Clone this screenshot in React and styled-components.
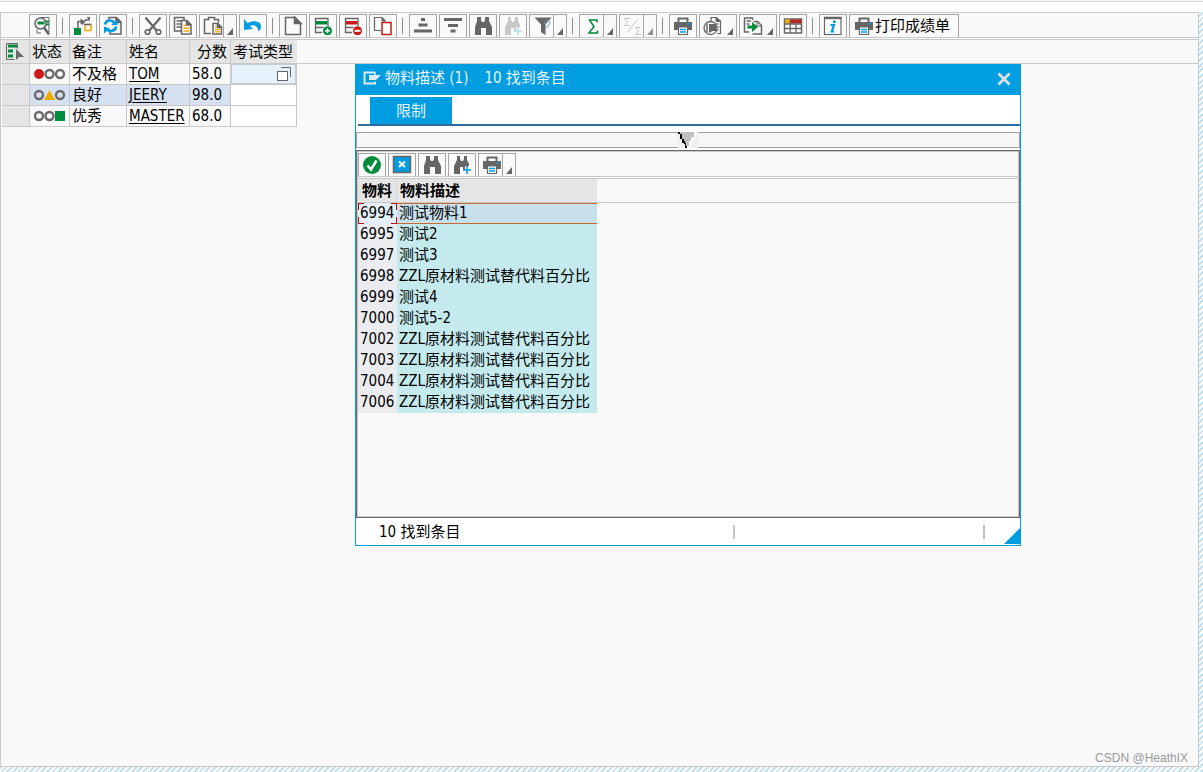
import React from 'react';
import styled, { createGlobalStyle, css } from 'styled-components';

const GlobalStyle = createGlobalStyle`
  *, *::before, *::after { box-sizing: border-box; }
  html, body, #root { height: 100%; }
  body {
    margin: 0;
    color: #000;
    font-family: "DejaVu Sans Condensed", "Noto Sans", "Noto Sans CJK SC", sans-serif;
    font-size: 15px;
    line-height: 20px;
  }
  button, input { font: inherit; color: inherit; }
`;

const Page = styled.div`
  display: flex;
  flex-direction: column;
  min-height: 100vh;
  padding: 0 4px 5px 0;
  background: repeating-linear-gradient(135deg, #ffffff 0 2px, #c5e1f0 2px 4px);
`;

const TopStrip = styled.div`
  flex: none;
  height: 12px;
  margin-right: -4px;
  border-top: 1px solid #f4f4f4;
  background: #fff;
  box-shadow: inset 0 1px #d9d9d9;
`;

const Workspace = styled.main`
  position: relative;
  flex: 1;
  background: #f9f9f9;
  border: 1px solid #c8c8c8;
`;

const Toolbar = styled.div`
  display: flex;
  gap: 2px;
  height: 25px;
  padding: 1px 0 0 ${p => p.$inset}px;
  border-bottom: 1px solid #c8c8c8;
`;

const Separator = styled.span`
  width: 8px;
  height: 16px;
  margin-top: 4px;
  padding-left: 3px;
  &::before {
    content: "";
    display: block;
    width: 1px;
    height: 100%;
    background: #8c8c8c;
  }
`;

const ToolButton = styled.button`
  display: flex;
  align-items: center;
  gap: 1px;
  min-width: 28px;
  height: 23px;
  padding: 0 8px 0 4px;
  border: 1px solid #a6a6a6;
  border-bottom: 0;
  background: #fafafa;
  white-space: nowrap;
  ${p => !p.$label && css`
    width: ${p.$menu ? 38 : 28}px;
    padding: 0 0 0 3px;
    gap: 0;
  `}
  svg { flex: none; display: block; }
`;

const MenuMark = styled.span`
  align-self: stretch;
  display: flex;
  align-items: flex-end;
  width: 12px;
  padding: 0 0 2px 3px;
  border-left: 1px solid ${p => (p.$split ? '#a6a6a6' : 'transparent')};
`;

const HeaderBand = styled.div`
  margin-top: 1px;
  border-top: 1px solid #c8c8c8;
  background: linear-gradient(#c8c8c8, #c8c8c8) 0 23px / 100% 1px no-repeat;
`;

const DataTable = styled.table`
  table-layout: fixed;
  width: 295px;
  margin-left: 1px;
  border-collapse: separate;
  border-spacing: 0;
`;

const HeadCell = styled.th`
  height: 24px;
  padding: 0 3px 0 2px;
  border-right: 1px solid #c8c8c8;
  border-bottom: 1px solid #c8c8c8;
  background: #e5e5e5;
  font-weight: 400;
  text-align: ${p => (p.$right ? 'right' : 'left')};
  white-space: nowrap;
  &:last-child { border-right-color: #e5e5e5; }
  svg { display: block; }
`;

const Cell = styled.td`
  height: 21px;
  padding: 0 0 0 2px;
  border-right: 1px solid #c8c8c8;
  border-bottom: 1px solid #c8c8c8;
  background: ${p => p.$fill || '#f9f9f9'};
  line-height: 20px;
  white-space: nowrap;
  svg { display: block; }
`;

const NameLink = styled.a`
  color: #000;
  text-decoration: underline;
  text-underline-offset: 2px;
`;

const EntryField = styled.div`
  display: flex;
  align-items: center;
  height: 20px;
  margin-left: -2px;
  border: 1px solid #c8ccd0;
  background: #e5f2fb;
  input {
    flex: 1;
    min-width: 0;
    height: 18px;
    padding: 0;
    border: 0;
    outline: 0;
    background: transparent;
  }
  button {
    width: 19px;
    height: 18px;
    padding: 1px 0;
    border: 0;
    background: transparent;
  }
`;

const Dialog = styled.section`
  position: absolute;
  top: 51px;
  left: 354px;
  display: flex;
  flex-direction: column;
  width: 666px;
  border: 1px solid #009de0;
  border-top: 0;
  background: #fff;
`;

const TitleBar = styled.header`
  display: flex;
  align-items: center;
  height: 31px;
  padding: 0 9px 4px 7px;
  background: #009de0;
  color: #e8f2f8;
  h2 {
    flex: 1;
    margin: 0 0 0 4px;
    font-size: 15px;
    font-weight: 400;
  }
  span { margin-left: 16px; }
`;

const CloseButton = styled.button`
  width: 14px;
  height: 14px;
  margin-top: 3px;
  padding: 0;
  border: 0;
  background: transparent;
  svg { display: block; }
`;

const TabRow = styled.div`
  margin-left: 2px;
  padding: 2px 0 0 12px;
  border-bottom: 2px solid #2f6ca0;
`;

const Tab = styled.button`
  display: block;
  width: 82px;
  height: 27px;
  padding: 0;
  border: 0;
  background: #009de0;
  color: #e8f2f8;
`;

const Splitter = styled.div`
  display: flex;
  justify-content: center;
  height: 16px;
  margin: 6px 0 2px;
  border: 1px solid #a0a0a0;
  background: #f7f7f7;
  svg { display: block; margin: -1px 0; }
`;

const ResultPane = styled.div`
  height: 368px;
  border: 1px solid #6a6a6a;
  background: #f9f9f9;
  box-shadow: inset 0 0 0 1px #c8c8c8;
  padding: 1px;
`;

const ResultTable = styled.table`
  table-layout: fixed;
  width: 239px;
  border-collapse: separate;
  border-spacing: 0;
`;

const ResultHead = styled.th`
  height: 24px;
  padding: 0 0 0 ${p => (p.$key ? 4 : 3)}px;
  border-right: 1px solid ${p => (p.$key ? '#d4d4d4' : '#e5e5e5')};
  border-bottom: 1px solid #c8c8c8;
  background: #e5e5e5;
  text-align: left;
  white-space: nowrap;
`;

const KeyCell = styled.td`
  height: 21px;
  padding: 0 0 0 2px;
  background: #ebecf0;
  line-height: 21px;
  ${p => p.$selected && css`
    background:
      linear-gradient(90deg, #b01020 6px, transparent 6px 33px, #b01020 33px) 0 0 / 100% 1px no-repeat,
      linear-gradient(90deg, #b01020 6px, transparent 6px 33px, #b01020 33px) 0 100% / 100% 1px no-repeat,
      linear-gradient(#b01020 7px, transparent 7px 14px, #b01020 14px) 0 0 / 1px 100% no-repeat,
      linear-gradient(#b01020 7px, transparent 7px 14px, #b01020 14px) 100% 0 / 1px 100% no-repeat,
      #e5eff6;
  `}
`;

const TextCell = styled.td`
  height: 21px;
  padding: 0 0 0 2px;
  background: ${p => (p.$selected ? '#c8dfec' : '#c5eaed')};
  box-shadow: ${p => (p.$selected ? 'inset 0 1px #c8692d, inset 0 -1px #c8692d' : 'none')};
  line-height: 21px;
  white-space: nowrap;
`;

const StatusBar = styled.footer`
  display: flex;
  align-items: center;
  height: 27px;
  padding-left: 23px;
`;

const StatusText = styled.span`
  flex: 1;
`;

const StatusField = styled.span`
  width: ${p => p.$width}px;
  height: 14px;
  border-left: 2px solid #c2c2c2;
`;

const ResizeGrip = styled.svg`
  position: absolute;
  right: 0;
  bottom: 1px;
`;

const Watermark = styled.div`
  position: absolute;
  right: 10px;
  bottom: 0;
  color: #999;
  font-family: "Liberation Sans", sans-serif;
  font-size: 12px;
  line-height: 16px;
`;

const G = '#666';
const GREEN = '#008a3b';
const BLUE = '#009de0';
const RED = '#cc1919';
const AMBER = '#f0ab00';

const Icon = ({ children, w = 20, h = 20 }) => (
  <svg width={w} height={h} viewBox={`0 0 ${w} ${h}`} fill="none" stroke={G} strokeWidth="1.5" aria-hidden="true">
    {children}
  </svg>
);

const binoculars = 'M4 1h4v3l1 2h2l1-2V1h4v4l3 6v8h-6v-7H8v7H2v-8l2-6z';
const binocularsCut = 'M5 1h3v3l1 2h2l1-2V1h3v4l2 4v2h-4v4h-2v-3H8v7H2v-8l3-6z';

const icons = {
  details: (
    <Icon>
      <path d="M8 1.500H16V16H14" strokeWidth="1" />
      <path d="M11 5.500h5M12 8.500h4" stroke={GREEN} strokeWidth="2" />
      <path d="M4 13.500V17h4" strokeWidth="1" />
      <circle cx="7.500" cy="7.500" r="5.500" fill="#f9f9f9" />
      <path d="M4.500 7h7" stroke={GREEN} strokeWidth="3" />
      <path d="M11 11.500l5 7" strokeWidth="2.600" />
    </Icon>
  ),
  check: (
    <Icon>
      <path d="M5 12V5.500h4M12 4h4" />
      <path d="M7.500 2.500l4.500 3-4.500 3zM13.500 1h3.500v4z" fill={G} stroke="none" />
      <path d="M9 8.500l4-5" />
      <rect x="1" y="12" width="7" height="7" fill={GREEN} stroke="none" />
      <rect x="12" y="8.500" width="6" height="6" stroke={AMBER} />
      <path d="M11 8.500h7" />
    </Icon>
  ),
  refresh: (
    <Icon>
      <path d="M6 4V1.500h7.500L18 6v12H7v-2" />
      <path d="M13 1v5.500h5" fill={G} />
      <path d="M2 8.500C3 4 9 3 11 7M13 10.500c-.5 5-7 6-9.500 2" stroke={BLUE} strokeWidth="2.600" />
      <path d="M8 9h6.500V3.500zM1 10.500v7l6-5z" fill={BLUE} stroke="none" />
    </Icon>
  ),
  cut: (
    <Icon>
      <path d="M2.500 1.500L14 15M17.500 1.500L6 15" strokeWidth="2.200" />
      <circle cx="4.500" cy="16" r="2.300" strokeWidth="1.600" />
      <circle cx="15.500" cy="16" r="2.300" strokeWidth="1.600" />
    </Icon>
  ),
  copy: (
    <Icon>
      <path d="M1.500 1.500H11V15H1.500z" />
      <path d="M3.500 5h5M3.500 8h5M3.500 11h5" strokeWidth="1.300" />
      <path d="M8.500 4.500H14l4 4v9.500H8.500z" fill="#fff" />
      <path d="M13.500 4v5H18" fill={G} />
      <path d="M10.500 9.500h3M10.500 12.200h6M10.500 15h6" stroke={AMBER} />
    </Icon>
  ),
  paste: (
    <Icon>
      <path d="M5 3.500H1.500v14H8M12 3.500h3.500v3" />
      <path d="M5.500 4.500v-3h6v3" fill="#fff" />
      <path d="M10 7.500h5l3.500 3.500v7H10z" fill="#fff" />
      <path d="M14.500 7.500v4h4" fill={G} />
      <path d="M12 11h2M12 13.500h5M12 15.800h5" stroke={AMBER} />
    </Icon>
  ),
  undo: (
    <Icon>
      <path d="M1 3v11l9-1-3-3c4-2 8 0 8.500 5.500C22 9 15 2 4.500 7z" fill={BLUE} stroke="none" />
    </Icon>
  ),
  create: (
    <Icon>
      <path d="M2.500 1.500H12L17.500 7v11.500h-15z" />
      <path d="M11.500 1v6.500H18z" fill={G} />
    </Icon>
  ),
  insertRow: (
    <Icon>
      <path d="M9 16.500H2.500v-14h12.500V10M2.500 11.500h8" strokeWidth="1.300" />
      <rect x="3" y="5" width="11.500" height="3.500" fill={GREEN} stroke="none" />
      <circle cx="14.500" cy="14.800" r="4.500" fill={GREEN} stroke="none" />
      <path d="M12 14.800h5M14.500 12.300v5" stroke="#fff" />
    </Icon>
  ),
  deleteRow: (
    <Icon>
      <path d="M9 16.500H2.500v-14h12.500V10M2.500 11.500h8" strokeWidth="1.300" />
      <rect x="3" y="5" width="11.500" height="3.500" fill={RED} stroke="none" />
      <circle cx="14.500" cy="14.800" r="4.500" fill={RED} stroke="none" />
      <path d="M11.500 14.800h6" stroke="#fff" strokeWidth="2" />
    </Icon>
  ),
  duplicate: (
    <Icon>
      <path d="M8 14.500H1.500v-13H9L12.500 5" strokeWidth="1.200" />
      <path d="M8.500 1v4.500H13z" fill={G} stroke="none" />
      <rect x="9" y="6.500" width="9" height="12" stroke={RED} fill="#fff" />
    </Icon>
  ),
  sortUp: (
    <Icon>
      <path d="M8 3.500h4M5.500 9h9M1 15h18" strokeWidth="3.200" />
    </Icon>
  ),
  sortDown: (
    <Icon>
      <path d="M1 3.500h18M5 9.500h10M7.500 15h5" strokeWidth="3.200" />
    </Icon>
  ),
  find: <Icon><path d={binoculars} fill={G} stroke="none" /></Icon>,
  findNextOff: (
    <Icon>
      <path d={binocularsCut} fill="#c8c8c8" stroke="none" />
      <path d="M11 15h8M15 11v8" stroke="#b9dff0" />
    </Icon>
  ),
  findNext: (
    <Icon>
      <path d={binocularsCut} fill={G} stroke="none" />
      <path d="M11 15h8M15 11v8" stroke={BLUE} />
    </Icon>
  ),
  filter: (
    <Icon>
      <path d="M1.500 1.500h17L12.500 8.500v10.500L8 16V8.500z" fill={G} stroke="none" />
      <path d="M12 11.500l3-1 2-5-3-1.500-3 4" stroke="#7f9aa6" strokeWidth="1" />
    </Icon>
  ),
  sum: (
    <Icon>
      <path d="M14 6.500V4H6.500l4.500 6.500L6 17h8.500v-2.500" stroke={GREEN} strokeWidth="1.500" />
    </Icon>
  ),
  subtotal: (
    <Icon>
      <path d="M6.500 2.500h-5l3 3.500-3 3.500h5.500M17.500 11.500h-5l3 3.500-3 3.500h5.500M14 4L5 16" stroke="#c4c4c4" strokeWidth="1" />
    </Icon>
  ),
  print: (
    <Icon>
      <path d="M5.500 6V2.500h9V6" strokeWidth="2" />
      <path d="M1 6h18v8h-4v-3H5v3H1z" fill={G} stroke="none" />
      <path d="M14.500 7.800h2.500" stroke={BLUE} />
      <path d="M5.500 11h9v7.500h-9z" fill="#fff" strokeWidth="1.200" />
      <path d="M7 13.500h6M7 16h6" stroke={BLUE} />
    </Icon>
  ),
  views: (
    <Icon>
      <path d="M8 5V1.500h5.500L17.500 5v12.500H14M12 8h4M13.500 11h3M14 14h2" strokeWidth="1.200" />
      <path d="M13 1v4.500h4.500" fill={G} strokeWidth="1" />
      <circle cx="7.500" cy="12" r="6.500" fill="#fff" strokeWidth="1.300" />
      <path d="M6 8h7v7H9.500L6 17z" fill={G} stroke="none" />
      <path d="M4 7.500v9" />
    </Icon>
  ),
  exportData: (
    <Icon>
      <path d="M9.500 4V2H1.500v14H6M3.500 5h4.500M3.500 8h3" />
      <path d="M10.500 5.500h4l4 4V18H9.500" />
      <path d="M14 5v5h4.500" strokeWidth="1" />
      <path d="M4.500 9.500H9V6l6 5-6 5v-3.500H4.500z" fill={GREEN} stroke="none" />
    </Icon>
  ),
  layout: (
    <Icon>
      <rect x="1.500" y="3" width="17" height="14" fill="#fff" />
      <rect x="2" y="3.500" width="5" height="4" fill={AMBER} stroke="none" />
      <rect x="7" y="3.500" width="11" height="4" fill={RED} stroke="none" />
      <path d="M1 8h18M1 12.500h18M7.200 3v14M13 3v14" strokeWidth="1.300" />
    </Icon>
  ),
  info: (
    <Icon>
      <rect x="1.500" y="1.500" width="16.500" height="17" fill="#fff" strokeWidth="1.200" />
      <path d="M1 2h17.500" strokeWidth="2.400" />
      <path d="M7.500 9H11L8.800 15.500h2.400" stroke={BLUE} strokeWidth="2.200" />
      <circle cx="11.300" cy="5.800" r="1.500" fill={BLUE} stroke="none" />
    </Icon>
  ),
  accept: (
    <Icon>
      <circle cx="10" cy="10" r="9" fill={GREEN} stroke="none" />
      <path d="M5.500 10.500l3.500 4 5.500-9" stroke="#fff" strokeWidth="2.600" />
    </Icon>
  ),
  cancel: (
    <Icon>
      <rect x="1.500" y="1.500" width="17" height="16" fill={BLUE} />
      <path d="M7 6.500l6 5.500M13 6.500l-6 5.500" stroke="#fff" strokeWidth="2" />
    </Icon>
  ),
};

const MenuArrow = ({ muted }) => (
  <svg width="7" height="7" viewBox="0 0 7 7" aria-hidden="true">
    <path d="M6 0v7H0z" fill={muted ? '#909098' : '#666'} />
  </svg>
);

const mainTools = [
  { icon: 'details', title: '明细' }, null,
  { icon: 'check', title: '检查' }, { icon: 'refresh', title: '刷新' }, null,
  { icon: 'cut', title: '剪切' }, { icon: 'copy', title: '复制' },
  { icon: 'paste', title: '粘贴', menu: true, split: true }, { icon: 'undo', title: '撤销' }, null,
  { icon: 'create', title: '新建' }, { icon: 'insertRow', title: '插入行' },
  { icon: 'deleteRow', title: '删除行' }, { icon: 'duplicate', title: '复制行' }, null,
  { icon: 'sortUp', title: '升序' }, { icon: 'sortDown', title: '降序' },
  { icon: 'find', title: '查找' }, { icon: 'findNextOff', title: '查找下一个', disabled: true },
  { icon: 'filter', title: '过滤', menu: true, split: true }, null,
  { icon: 'sum', title: '总计', menu: true, split: true },
  { icon: 'subtotal', title: '小计', menu: true, split: true, disabled: true }, null,
  { icon: 'print', title: '打印' }, { icon: 'views', title: '视图', menu: true },
  { icon: 'exportData', title: '导出', menu: true }, { icon: 'layout', title: '布局' }, null,
  { icon: 'info', title: '信息' }, { icon: 'print', label: '打印成绩单' },
];

const dialogTools = [
  { icon: 'accept', title: '确认' }, { icon: 'cancel', title: '取消' },
  { icon: 'find', title: '查找' }, { icon: 'findNext', title: '查找下一个' },
  { icon: 'print', title: '打印', menu: true, split: true },
];

const Tools = ({ items, inset }) => (
  <Toolbar role="toolbar" $inset={inset}>
    {items.map((t, i) => t === null ? <Separator key={i} /> : (
      <ToolButton key={i} type="button" aria-label={t.title} disabled={t.disabled} $menu={t.menu} $label={t.label}>
        {icons[t.icon]}
        {t.label}
        {t.menu && <MenuMark $split={t.split}><MenuArrow muted={t.disabled} /></MenuMark>}
      </ToolButton>
    ))}
  </Toolbar>
);

const ring = cx => <circle cx={cx} cy="6" r="4" fill="none" stroke="#6a6a6a" strokeWidth="2.400" />;

const StatusLight = ({ level }) => (
  <svg width="34" height="12" viewBox="0 0 34 12" role="img" aria-label={level}>
    {level === 'red' ? <circle cx="7" cy="6" r="5" fill={RED} /> : ring(7)}
    {level === 'yellow' ? <path d="M17.500 1l5.500 10H12z" fill={AMBER} /> : ring(17.5)}
    {level === 'green' ? <rect x="23" y="1" width="10" height="10" fill={GREEN} /> : ring(28)}
  </svg>
);

const students = [
  { level: 'red', note: '不及格', name: 'TOM', score: '58.0' },
  { level: 'yellow', note: '良好', name: 'JEERY', score: '98.0', fill: '#d5e0f1' },
  { level: 'green', note: '优秀', name: 'MASTER', score: '68.0' },
];

const longText = 'ZZL原材料测试替代料百分比';
const materials = [
  ['6994', '测试物料1'], ['6995', '测试2'], ['6997', '测试3'], ['6998', longText],
  ['6999', '测试4'], ['7000', '测试5-2'], ['7002', longText], ['7003', longText],
  ['7004', longText], ['7006', longText],
];

const StudentTable = () => (
  <HeaderBand>
    <DataTable>
      <colgroup>
        {[28, 40, 57, 63, 41, 66].map((w, i) => <col key={i} width={w} />)}
      </colgroup>
      <thead>
        <tr>
          <HeadCell aria-label="选择">
            <Icon w={20} h={20}>
              <path d="M2.500 1.500h11v5M2.500 1.500v16h8" strokeWidth="1" />
              <path d="M4 4h9M4 9h5M4 14h5" stroke={GREEN} strokeWidth="3" />
              <path d="M12 7v11l3-3h5z" fill={G} stroke="none" />
            </Icon>
          </HeadCell>
          <HeadCell>状态</HeadCell>
          <HeadCell>备注</HeadCell>
          <HeadCell>姓名</HeadCell>
          <HeadCell $right>分数</HeadCell>
          <HeadCell>考试类型</HeadCell>
        </tr>
      </thead>
      <tbody>
        {students.map((s, i) => (
          <tr key={s.name}>
            <Cell $fill="#e5e5e5" />
            <Cell $fill={s.fill}><StatusLight level={s.level} /></Cell>
            <Cell $fill={s.fill}>{s.note}</Cell>
            <Cell $fill={s.fill}><NameLink href="#">{s.name}</NameLink></Cell>
            <Cell $fill={s.fill}>{s.score}</Cell>
            <Cell $fill="#fff">
              {i === 0 && (
                <EntryField>
                  <input aria-label="考试类型" />
                  <button type="button" aria-label="选择值">
                    <Icon w={16} h={16}>
                      <path d="M5 1.500h9.500V11" strokeWidth="1" />
                      <rect x="1.500" y="5.500" width="10" height="9" fill="#fff" strokeWidth="1" />
                    </Icon>
                  </button>
                </EntryField>
              )}
            </Cell>
          </tr>
        ))}
      </tbody>
    </DataTable>
  </HeaderBand>
);

const SearchDialog = () => (
  <Dialog role="dialog" aria-labelledby="dialog-title">
    <TitleBar>
      <svg width="18" height="14" viewBox="0 0 18 14" aria-hidden="true">
        <path d="M12 1.500H1.500v11H12v-2M12 3.500V1.500" fill="none" stroke="#dfe9ee" strokeWidth="2" />
        <path d="M6 4h12l-5 5H6z" fill="#dfe9ee" />
      </svg>
      <h2 id="dialog-title">物料描述 (1)<span>10 找到条目</span></h2>
      <CloseButton type="button" aria-label="关闭">
        <svg width="14" height="14" viewBox="0 0 14 14">
          <path d="M1.500 1.500l11 11M12.500 1.500l-11 11" stroke="#e0e0e0" strokeWidth="2.800" />
        </svg>
      </CloseButton>
    </TitleBar>
    <TabRow role="tablist">
      <Tab type="button" role="tab" aria-selected="true">限制</Tab>
    </TabRow>
    <Splitter>
      <svg width="20" height="16" viewBox="0 0 20 16" shapeRendering="crispEdges" aria-hidden="true">
        <path d="M0 0h20v16H0z" fill="#f0f0f0" />
        <path d="M1 0h15v5l-3 3-2 7H9z" fill="#c0c0c0" />
        <path d="M16 0h2v5h-2zM13 5h3v4h-3zM11 9h2v5h-2zM9 14h2v2H9z" fill="#fff" />
        <path d="M0 0h2v2h2v5h2v2h1v2h1v3h1v2H7v-4H6v-1H4V7H2V2H0z" fill="#000" />
      </svg>
    </Splitter>
    <ResultPane>
      <Tools items={dialogTools} inset={0} />
      <HeaderBand>
        <ResultTable>
          <colgroup><col width="39" /><col width="200" /></colgroup>
          <thead>
            <tr><ResultHead $key>物料</ResultHead><ResultHead>物料描述</ResultHead></tr>
          </thead>
          <tbody>
            {materials.map(([id, text], i) => (
              <tr key={id}>
                <KeyCell $selected={i === 0}>{id}</KeyCell>
                <TextCell $selected={i === 0}>{text}</TextCell>
              </tr>
            ))}
          </tbody>
        </ResultTable>
      </HeaderBand>
    </ResultPane>
    <StatusBar>
      <StatusText>10 找到条目</StatusText>
      <StatusField $width={250} />
      <StatusField $width={37} />
    </StatusBar>
    <ResizeGrip width="16" height="16" viewBox="0 0 16 16" aria-hidden="true">
      <path d="M16 0v16H0z" fill={BLUE} />
    </ResizeGrip>
  </Dialog>
);

export default function App() {
  return (
    <Page>
      <GlobalStyle />
      <TopStrip />
      <Workspace>
        <Tools items={mainTools} inset={28} />
        <StudentTable />
        <SearchDialog />
        <Watermark>CSDN @HeathIX</Watermark>
      </Workspace>
    </Page>
  );
}
